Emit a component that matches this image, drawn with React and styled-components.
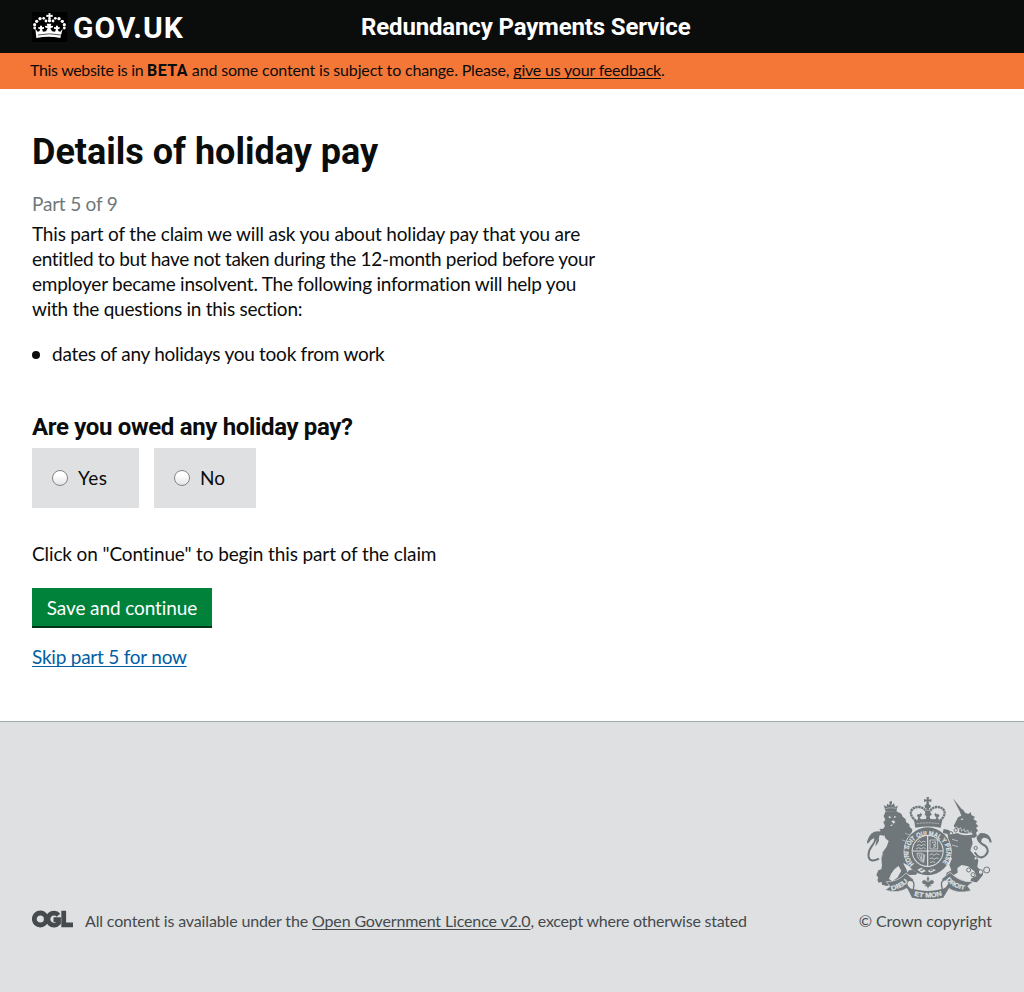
import React from 'react';
import styled, { createGlobalStyle } from 'styled-components';

const GlobalStyle = createGlobalStyle`
  * { box-sizing: border-box; }
  body {
    margin: 0;
    background: #fff;
    color: #0b0c0c;
    font-family: Lato, "Liberation Sans", sans-serif;
    font-size: 19px;
    line-height: 25px;
  }
`;

const Page = styled.div`
  display: flex;
  flex-direction: column;
  min-height: 992px;
`;

const Header = styled.header`
  display: grid;
  grid-template-columns: 329px 1fr;
  height: 53px;
  padding: 0 32px;
  background: #0b0c0c;
  color: #fff;
`;

const Brand = styled.div`
  display: flex;
  align-items: flex-start;
  gap: 5px;
  padding-top: 12px;
`;

const Wordmark = styled.span`
  font: 700 30px/32px Roboto, sans-serif;
  letter-spacing: 1px;
`;

const ServiceName = styled.span`
  padding-top: 11px;
  font: 700 24px/32px Roboto, sans-serif;
  letter-spacing: -0.15px;
`;

const BetaBanner = styled.div`
  height: 36px;
  padding: 7px 30px;
  background: #f47738;
  font-size: 16px;
  line-height: 20px;
  white-space: pre;
`;

const Run = styled.span`
  letter-spacing: ${(p) => p.$track}px;
`;

const Strong = styled.strong`
  font-family: Roboto, sans-serif;
  letter-spacing: 0.4px;
`;

const Link = styled.a`
  color: ${(p) => p.$color || 'inherit'};
  letter-spacing: ${(p) => p.$track}px;
  text-decoration: underline;
  text-decoration-thickness: 1px;
  text-underline-offset: 2px;
  text-decoration-skip-ink: none;
`;

const Main = styled.main`
  flex: 1;
  padding: 40px 32px 0;
`;

const Title = styled.h1`
  margin: 0;
  font: 700 36px/46px Roboto, sans-serif;
`;

const PartLabel = styled.p`
  margin: 16px 0 5px;
  color: #6f777b;
  letter-spacing: -0.2px;
`;

const Intro = styled.p`
  margin: 0;
`;

const Line = styled.span`
  display: block;
  white-space: nowrap;
  letter-spacing: ${(p) => p.$track}px;
`;

const BulletList = styled.ul`
  margin: 20px 0 0;
  padding: 0;
  list-style: none;
`;

const Bullet = styled.li`
  display: flex;
  align-items: center;
  gap: 12px;
  letter-spacing: -0.26px;

  &::before {
    content: '';
    width: 8px;
    height: 8px;
    margin-top: 2px;
    border-radius: 50%;
    background: #0b0c0c;
  }
`;

const Question = styled.h2`
  margin: 46px 0 6px;
  font: 700 24px/30px Roboto, sans-serif;
  letter-spacing: -0.34px;
`;

const Choices = styled.div`
  display: flex;
  gap: 15px;
`;

const Choice = styled.label`
  display: flex;
  align-items: center;
  gap: 10px;
  width: ${(p) => p.$width}px;
  height: 60px;
  padding: 0 0 2px 20px;
  background: #dee0e2;
  letter-spacing: ${(p) => p.$track}px;
`;

const Radio = styled.input`
  appearance: none;
  width: 16px;
  height: 16px;
  margin: 2px 0 0;
  border: 1px solid #858585;
  border-radius: 50%;
  background: linear-gradient(#fff, #fff 30%, #e4e4e4);
`;

const Hint = styled.p`
  margin: 33px 0 22px;
  letter-spacing: -0.12px;
`;

const SaveButton = styled.button`
  display: block;
  width: 180px;
  height: 40px;
  padding: 1px 0 0;
  border: 0;
  border-bottom: 2px solid #003618;
  background: #00823b;
  color: #fff;
  font: 400 19px/25px Lato, sans-serif;
  letter-spacing: -0.1px;
`;

const Skip = styled.p`
  margin: 16px 0 0;
`;

const Footer = styled.footer`
  display: flex;
  align-items: flex-end;
  justify-content: space-between;
  height: 271px;
  padding: 0 32px 61px;
  border-top: 1px solid #a1acb2;
  background: #dee0e2;
  color: #454a4c;
  font-size: 16px;
  line-height: 20px;
`;

const Licence = styled.div`
  display: flex;
  align-items: flex-start;
  gap: 12px;
  white-space: pre;

  svg {
    margin-top: -1px;
  }
`;

const Copyright = styled.div`
  display: flex;
  flex-direction: column;
  align-items: flex-end;
  gap: 12px;
  letter-spacing: -0.05px;
`;

const Crown = () => (
  <svg width="36" height="30" viewBox="36 36 108 90" fill="#fff">
    <rect x="36" y="36" width="106" height="90" fill="#000" />
    <path d="M85 40h7l-1 5 7-1v7l-7-1 2 8h-9l2-8-7 1v-7l7 1z" />
    <circle cx="88.5" cy="62" r="5" />
    {[[78, 63, 4.2], [99, 63, 4.2], [71, 55, 4.2], [106, 55, 4.2], [60, 56, 5], [117, 56, 5], [50, 64, 5], [127, 64, 5], [44, 74, 4.8], [133, 74, 4.8], [44, 84, 4.2], [133, 84, 4.2]].map(([x, y, r]) => (
      <circle key={`${x}-${y}`} cx={x} cy={y} r={r} />
    ))}
    <path d="M46 86l7 9 5-1 3-6-6-2v-5l5 1v-5h6v5l6-1v5l-6 2 3 7 9-1 5-9-8-3v-5l7 1-2-7h14l-2 7 7-1v5l-8 3 5 9 9 1 3-7-6-2v-5l6 1v-5h6v5l5-1v5l-6 2 3 6 5 1 7-9-7 28q-36-7-72 0z" />
    <path d="M54 105q34-7 69 0" fill="none" stroke="#000" strokeWidth="2" />
  </svg>
);

const OglLogo = () => (
  <svg width="41" height="18" viewBox="0 0 41 18" fill="none" stroke="#454a4c" strokeWidth="4.8">
    <circle cx="8.3" cy="9" r="6" />
    <path d="M26.5 5.2A6 6 0 1 0 26.5 13V9.6H21.5" />
    <path d="M31.7.7v14.1H41" />
  </svg>
);

const Coat = styled.svg`
  display: block;

  text {
    font-family: "Liberation Sans", sans-serif;
    font-weight: 700;
    fill: #dee0e2;
    stroke: #dee0e2;
    stroke-width: 0.6px;
  }
`;

const ink = '#6f777b';
const paper = '#dee0e2';

const CoatOfArms = () => (
  <Coat width="125" height="102" viewBox="21 21 375 306" fill={ink}>
    <defs>
      <path id="garter" d="M162 222A57 50 0 1 1 246 219" />
      <path id="dieu" d="M94 302Q134 294 153 264" />
      <path id="droit" d="M258 269Q280 297 324 301" />
      <path id="etmon" d="M162 316Q204 330 249 315" />
    </defs>

    {/* royal crown */}
    <path d="M200 21h7l-1 8 8-2v9l-8-2 1 9 6 4-3 7h-14l-3-7 6-4 1-9-8 2v-9l8 2z" />
    <g fill="none" stroke={ink}>
      <path d="M167 92C140 70 155 49 178 51Q194 53 201 70M240 92C266 70 251 49 229 51Q213 53 206 70" strokeWidth="7" strokeDasharray="7 1.5" />
      <path d="M203 54v34" strokeWidth="8" strokeDasharray="7 1.5" />
    </g>
    <path d="M162 89l10 2 3-9-5-4 4-6 6 1 1-5 5 5-2 6-5 3 4 6 15-1 2-9-6-3 2-7 6 2 2-5 4 5 5-2 2 7-6 3 2 9 15 1 4-6-5-3-2-6 5-5 1 5 6-1 4 6-5 4 3 9 10-2-5 24q-38-7-76 0z" />
    <path d="M170 101q34-5 67 0" fill="none" stroke={paper} strokeWidth="2" strokeDasharray="6 3" />

    {/* lion */}
    <g>
      <path d="M71 45l9 5 1-9 7 5 1-13 6 13 7-6 3 11 8-4-4 18H77zM89 34h7v8h-7z" />
      <path d="M77 56q16-5 33 0" stroke={paper} strokeWidth="2" fill="none" strokeDasharray="6 2" />
      <path d="M76 66l33-2 15 7 4 9 9 8 1 8 10 7 1 8 8 7-1 7-6 9 13 9-3 11-12-3-2 7 13 5-5 10-12-3 4 12-1 12 13 7 7 13-1 14 8 8 4 9-8 9-20 1-8-5 7-9 9-1-8-12-16-8-14 6-15 12-10 14-6 15 12 8-1 8-17 5-15-4-1-8-9 2-4-8 3-7-6-8 6-14 9-3 2-14-3-18 5-19 12-17 6-17-10-8-4-12 5-6-9-8 7-11-5-12 6-6-5-12z" />
      <path d="M81 123l-9 14-13-2-3-8 6-4-4-6 11-1zM112 222l12 20-12 21-13 9 2 10 22-2 5-12 16-11-4-18-13-24z" />
      <path d="M57 206C16 226 22 185 37 166Q51 149 43 139Q32 133 24 158" fill="none" stroke={ink} strokeWidth="6" />
      <path d="M21 162q3-29 22-37 20-3 26 4-14 2-12 23-4 11-12 17 8-20 0-26-10 3-24 19z" />
      <path d="M86 78l9 4-8 3zM103 77l6 4-7 3zM94 94l6-3 6 5-5 5zM90 106l9-3-4 6z" fill={paper} />
      <path d="M135 130l17 6M127 150l18 6M69 190q-7 14-5 26" stroke={paper} strokeWidth="1.5" fill="none" />
    </g>

    {/* unicorn */}
    <g>
      <path d="M279 25l36 45-10 6z" />
      <path d="M301 68l7-11 7 11 10 4 7-6 2 9 11 6-5 6 12 8-5 5 8 9-7 4 6 9-6 6 3 10-9 6-33-5-12-11 1-13-9 3-8-10 13-26 10-5z" />
      <path d="M275 133l34-7 25 13 4 21-7 21 11 14 13 16-3 20 15 15 2 9-18 22-20-2 3-10 15-7-6-14-19-15-19-4-13 9 1 14-22 13-14-3 3-10 14-7-6-16 8-20-13-13-9-15-17 2-2-13-9-7 4-15 12 3-1 9 11-3 13-11-3-10-14-3 3-12 15 3 14 13z" />
      <path d="M344 187Q358 210 374 198C392 183 380 167 366 162Q347 147 363 136Q386 127 392 157" fill="none" stroke={ink} strokeWidth="6" />
      <path d="M360 130q25-5 35 27-10-14-24-14-10 2-6 20-16-9-15-22z" />
      <path d="M285 122q22 16 52 9" fill="none" stroke={paper} strokeWidth="5" />
      <path d="M285 115l5-5 5 9 7-6 3 10 8-6 2 9 9-6 1 10 10-5" fill="none" stroke={paper} strokeWidth="2" />
      <path d="M301 88l8-3-1 6z" fill={paper} />
      <path d="M276 148l18 5M276 165l18 5" stroke={paper} strokeWidth="2" />
    </g>
    <g fill="none" stroke={ink} strokeWidth="3">
      <circle cx="287" cy="121" r="5" fill={paper} /><circle cx="273" cy="130" r="5" fill={paper} />
      <circle cx="347" cy="174" r="5" fill={paper} /><circle cx="347" cy="205" r="5" fill={paper} />
      <circle cx="326" cy="240" r="6" fill={paper} /><circle cx="339" cy="254" r="6" fill={paper} />
      <circle cx="362" cy="246" r="7" fill={paper} /><circle cx="380" cy="240" r="9" />
    </g>

    {/* garter and shield */}
    <ellipse cx="203" cy="183" rx="72" ry="72" fill={paper} />
    <ellipse cx="203" cy="184" rx="70" ry="72" />
    <circle cx="203" cy="183" r="48" fill={paper} />
    <circle cx="203" cy="183" r="45" />
    <path d="M203 138v90M158 183h90" stroke={paper} strokeWidth="3.5" />
    <g fill="none" stroke={paper} strokeWidth="2.2">
      <path d="M172 157l7-5 5 6 5-5 8 3M170 167l8-3 5 4 7-5 7 3M168 177l8-4 7 4 7-4 7 3" />
      <path d="M209 195l7-4 6 5 7-5 9 3M209 207l7-4 6 5 7-4 7 1M210 218l7-3 8 2" />
      <path d="M210 150h23v27h-23zM216 158l10-3 2 7-8 2 8 5-9 4" />
      <path d="M171 190q12-4 23 5l-3 22q-20-7-20-27zM177 193l7 18M183 192l4 22M190 194v21" />
    </g>
    <text fontSize="20"><textPath href="#garter" textLength="242" lengthAdjust="spacingAndGlyphs">HONI SOIT QUI MAL Y PENSE</textPath></text>
    <path d="M172 239l12-6 14 10-13 6zM203 243l13-7 12 4-16 8z" fill={paper} />
    <path d="M181 241l9-2M210 242l9-3" stroke={ink} strokeWidth="4" />

    {/* motto ribbon */}
    <path d="M138 249l24 21-18 23q-32 20-68 7l14-11-11-14q36 1 59-26zM270 247l-25 20 18 26q30 21 70 9l-10-14 17-13q-39 4-70-28z" stroke={paper} strokeWidth="2" />
    <path d="M145 271q17-2 17 13l-3 21q-18-5-19-24zM262 269q-17-1-18 14l4 22q17-6 19-25z" fill={paper} stroke={ink} strokeWidth="4" />
    <path d="M141 282q7 16 22 16 40 10 80 0 15-1 22-18l1 16-16 27q-47 10-94 0l-14-28z" />
    <text fontSize="20"><textPath href="#dieu" textLength="58" lengthAdjust="spacingAndGlyphs">DIEU</textPath></text>
    <text fontSize="19"><textPath href="#droit" textLength="65" lengthAdjust="spacingAndGlyphs">DROIT</textPath></text>
    <text fontSize="20"><textPath href="#etmon" textLength="86" lengthAdjust="spacingAndGlyphs">ET MON</textPath></text>
    <path d="M204 257q8 9 2 18 11-11 16-1 2 9-10 10l4 6-8-1-4 10-4-10-8 1 4-6q-12-1-10-10 5-10 16 1-6-9 2-18z" stroke={paper} strokeWidth="2" />
  </Coat>
);

const introLines = [
  ['This part of the claim we will ask you about holiday pay that you are', -0.19],
  ['entitled to but have not taken during the 12-month period before your', -0.33],
  ['employer became insolvent. The following information will help you', -0.24],
  ['with the questions in this section:', -0.26],
];

export default function App() {
  return (
    <Page>
      <GlobalStyle />
      <Header>
        <Brand>
          <Crown />
          <Wordmark>GOV.UK</Wordmark>
        </Brand>
        <ServiceName>Redundancy Payments Service</ServiceName>
      </Header>
      <BetaBanner>
        <Run $track={-0.33}>{'This website is in '}</Run>
        <Strong>BETA</Strong>
        <Run $track={-0.16}>{' and some content is subject to change. Please, '}</Run>
        <Link $track={-0.19}>give us your feedback</Link>.
      </BetaBanner>
      <Main>
        <Title>Details of holiday pay</Title>
        <PartLabel>Part 5 of 9</PartLabel>
        <Intro>
          {introLines.map(([text, track]) => (
            <Line key={text} $track={track}>{text}</Line>
          ))}
        </Intro>
        <BulletList>
          <Bullet>dates of any holidays you took from work</Bullet>
        </BulletList>
        <Question>Are you owed any holiday pay?</Question>
        <Choices>
          <Choice $width={107} $track={0.5}><Radio type="radio" name="owed" />Yes</Choice>
          <Choice $width={102} $track={0}><Radio type="radio" name="owed" />No</Choice>
        </Choices>
        <Hint>Click on "Continue" to begin this part of the claim</Hint>
        <SaveButton>Save and continue</SaveButton>
        <Skip><Link $color="#005ea5" $track={-0.23}>Skip part 5 for now</Link></Skip>
      </Main>
      <Footer>
        <Licence>
          <OglLogo />
          <span>
            <Run $track={-0.15}>{'All content is available under the '}</Run>
            <Link $track={-0.13}>Open Government Licence v2.0</Link>
            <Run $track={-0.23}>, except where otherwise stated</Run>
          </span>
        </Licence>
        <Copyright>
          <CoatOfArms />
          <span>© Crown copyright</span>
        </Copyright>
      </Footer>
    </Page>
  );
}
